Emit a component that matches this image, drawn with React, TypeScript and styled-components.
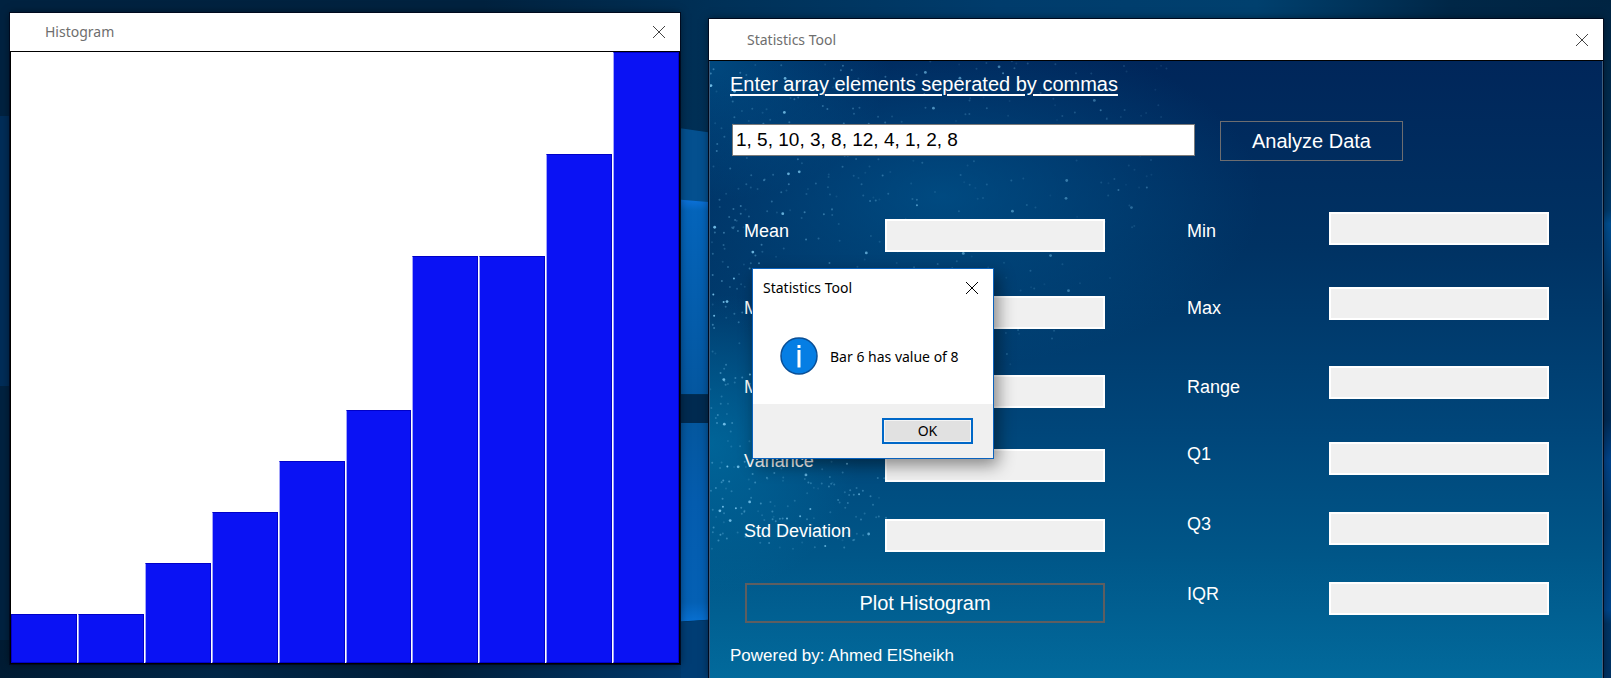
import React from "react";
import styled, { createGlobalStyle } from "styled-components";

const GlobalStyle = createGlobalStyle`
  *, *::before, *::after { box-sizing: border-box; }
  body { margin: 0; background: #00223f; }
`;

const uiFont = `"Noto Sans", "Open Sans", sans-serif`;
const formFont = `"Liberation Sans", Arial, sans-serif`;

const Desktop = styled.main`
  position: relative;
  isolation: isolate;
  display: flex;
  gap: 29px;
  min-height: 100vh;
  padding: 0 8px 0 10px;
  overflow: hidden;
`;

const WallpaperArt = styled.svg`
  position: absolute;
  inset: 0;
  z-index: -1;
  width: 100%;
  height: 100%;
`;

const AppWindow = styled.section<{ $grow: number }>`
  position: relative;
  display: flex;
  flex-direction: column;
  flex: ${(p) => p.$grow} 1 0;
  min-width: 0;
  box-shadow: 0 0 0 1px #000a1e, 0 0 8px rgba(0, 0, 0, 0.5);
`;

const HistogramWindow = styled(AppWindow)`
  margin: 13px 0 14px;
`;

const ToolWindow = styled(AppWindow)`
  margin-top: 19px;
`;

const TitleBar = styled.header<{ $tall?: boolean }>`
  display: flex;
  align-items: center;
  justify-content: space-between;
  height: ${(p) => (p.$tall ? 42 : 39)}px;
  padding: 0 15px 0 ${(p) => (p.$tall ? 38 : 35)}px;
  border-bottom: 1px solid #000;
  background: #fff;
`;

const WindowTitle = styled.h1`
  margin: 0;
  color: #6e6e6e;
  font: 400 14px/20px ${uiFont};
`;

const CloseButton = styled.button`
  display: grid;
  place-items: center;
  width: 12px;
  height: 12px;
  padding: 0;
  border: 0;
  background: none;
  color: #444;
`;

const Plot = styled.div`
  display: flex;
  flex: 1;
  align-items: flex-end;
  gap: 1px;
  border: solid #000;
  border-width: 0 1px 1px;
  background: #fff;
`;

const Bar = styled.div`
  flex: 1;
  border: 1px solid #0000c8;
  background: #0a12f4;

  & + & {
    border-left-color: #a4a6fa;
  }
`;

const ToolBody = styled.form`
  position: relative;
  isolation: isolate;
  flex: 1;
  padding: 11px 53px 7px 20px;
  border: solid #3d5f80;
  border-width: 0 1px;
  background:
    radial-gradient(ellipse 320px 170px at 26% 22%, rgba(0, 92, 150, 0.6), transparent),
    radial-gradient(ellipse 180px 140px at 0 0, rgba(0, 96, 152, 0.6), transparent),
    radial-gradient(ellipse 150px 150px at 0 62%, rgba(0, 112, 164, 0.7), transparent),
    linear-gradient(#00265a, #003263 30%, #00467a 60%, #005688 80%, #026a9c);
  color: #fff;
  font-family: ${formFont};
`;

const Sky = styled.svg`
  position: absolute;
  inset: 0;
  z-index: -1;
  width: 100%;
  height: 100%;
`;

const Prompt = styled.label`
  display: block;
  font-size: 20px;
  line-height: 24px;
  text-decoration: underline;
  text-underline-offset: 3px;
`;

const EntryRow = styled.div`
  display: grid;
  grid-template-columns: 463fr 183fr 121fr;
  align-items: start;
  column-gap: 25px;
  margin: 25px 0 0 2px;
`;

const ArrayInput = styled.input`
  width: 100%;
  height: 32px;
  margin-top: 3px;
  padding: 0 3px;
  border: 1px solid #7a7a7a;
  border-radius: 0;
  background: #fff;
  color: #000;
  font: 19px/24px ${formFont};
`;

const ActionButton = styled.button<{ $thick?: boolean }>`
  height: 40px;
  padding: 0;
  border: ${(p) => (p.$thick ? 2 : 1)}px solid ${(p) => (p.$thick ? "#5e5e60" : "#6d6d70")};
  border-radius: 0;
  background: transparent;
  color: #fff;
  font: 20px/24px ${formFont};
`;

const Results = styled.div`
  display: grid;
  grid-template-columns: 141px minmax(0, 1fr) 82px 142px minmax(0, 1fr);
  grid-template-rows: 75px 79px 76px 70px 70px 41px;
  align-items: start;
  margin: 51px 0 0 14px;
`;

const ResultLabel = styled.label<{ $column: number; $drop: number }>`
  grid-column: ${(p) => p.$column};
  padding-top: ${(p) => p.$drop}px;
  font-size: 18px;
  line-height: 20px;
`;

const ResultField = styled.input<{ $drop?: number }>`
  width: 100%;
  height: 33px;
  margin: ${(p) => p.$drop ?? 0}px 0 0;
  border: 2px solid #fff;
  border-radius: 0;
  background: #f0f0f0;
`;

const PlotButton = styled(ActionButton)`
  grid-column: 1 / 3;
  margin: 1px 0 0 1px;
`;

const Credit = styled.p`
  margin: 23px 0 0;
  font-size: 17px;
  line-height: 20px;
`;

const MessageBox = styled.div`
  position: absolute;
  top: 249px;
  left: 43px;
  display: flex;
  flex-direction: column;
  width: 242px;
  border: 1px solid #0a62bd;
  background: #fff;
  box-shadow: 4px 6px 16px rgba(0, 0, 0, 0.45);
  color: #000;
`;

const MessageHeader = styled.header`
  display: flex;
  align-items: center;
  justify-content: space-between;
  height: 38px;
  padding: 0 15px 0 10px;
`;

const MessageTitle = styled.h2`
  margin: 0;
  font: 400 14px/20px ${uiFont};
`;

const MessageContent = styled.div`
  display: flex;
  align-items: center;
  gap: 12px;
  height: 97px;
  padding: 0 27px;
`;

const MessageText = styled.p`
  margin: 2px 0 0;
  font: 14px/20px ${uiFont};
  white-space: nowrap;
`;

const MessageFooter = styled.footer`
  display: flex;
  align-items: center;
  justify-content: flex-end;
  height: 54px;
  padding: 0 20px;
  background: #f0f0f0;
`;

const OkButton = styled.button`
  width: 91px;
  height: 26px;
  padding: 0;
  border: 2px solid #0068c8;
  border-radius: 0;
  box-shadow: inset 0 0 0 1px #f4f4f4;
  background: #e1e1e1;
  color: #000;
  font: 14px/20px ${uiFont};
`;

const BlackCloseButton = styled(CloseButton)`
  color: #000;
`;

const CloseIcon = () => (
  <svg width="12" height="12" viewBox="0 0 12 12" aria-hidden="true">
    <path d="M0 0L12 12M12 0L0 12" stroke="currentColor" fill="none" />
  </svg>
);

const InfoIcon = () => (
  <svg width="38" height="38" viewBox="0 0 38 38" aria-hidden="true">
    <circle cx="19" cy="19" r="18" fill="#057ee4" stroke="#0a4f96" strokeWidth="1.5" />
    <rect x="17.5" y="8" width="3" height="3" fill="#fff" />
    <rect x="17.5" y="13" width="3" height="17.500" fill="#fff" />
  </svg>
);

const Wallpaper = () => (
  <WallpaperArt viewBox="0 0 1611 678" preserveAspectRatio="none" aria-hidden="true">
    <defs>
      <linearGradient id="sky" x1="0" x2="1" y1="0" y2="0">
        <stop offset="0" stopColor="#002240" />
        <stop offset="0.3" stopColor="#00223f" />
        <stop offset="0.45" stopColor="#003158" />
        <stop offset="0.62" stopColor="#003c6c" />
        <stop offset="0.78" stopColor="#00406e" />
        <stop offset="0.9" stopColor="#002747" />
        <stop offset="1" stopColor="#002442" />
      </linearGradient>
      <linearGradient id="floor" x1="0" x2="1" y1="0" y2="0">
        <stop offset="0" stopColor="#001c34" />
        <stop offset="0.3" stopColor="#002748" />
        <stop offset="0.6" stopColor="#001f3a" />
        <stop offset="1" stopColor="#003d74" />
      </linearGradient>
      <linearGradient id="edge" x1="0" x2="0" y1="0" y2="1">
        <stop offset="0" stopColor="#002442" />
        <stop offset="0.2" stopColor="#002d52" />
        <stop offset="0.31" stopColor="#003a6c" />
        <stop offset="0.33" stopColor="#004e90" />
        <stop offset="0.38" stopColor="#00417c" />
        <stop offset="0.45" stopColor="#003058" />
        <stop offset="0.62" stopColor="#002c58" />
        <stop offset="0.68" stopColor="#00448c" />
        <stop offset="0.76" stopColor="#003a70" />
        <stop offset="0.9" stopColor="#00468c" />
        <stop offset="0.92" stopColor="#003566" />
        <stop offset="1" stopColor="#003264" />
      </linearGradient>
      <linearGradient id="paneTop" x1="0" x2="0" y1="0" y2="1">
        <stop offset="0" stopColor="#0c72dc" />
        <stop offset="0.06" stopColor="#0464ba" />
        <stop offset="1" stopColor="#0457a0" />
      </linearGradient>
      <linearGradient id="paneBottom" x1="0" x2="0" y1="0" y2="1">
        <stop offset="0" stopColor="#04579e" />
        <stop offset="0.4" stopColor="#045cae" />
        <stop offset="0.9" stopColor="#0460b4" />
        <stop offset="1" stopColor="#0870d2" />
      </linearGradient>
    </defs>
    <rect width="1611" height="678" fill="url(#sky)" />
    <rect width="12" y="116" height="270" fill="#002d58" />
    <rect y="640" width="720" height="38" fill="url(#floor)" />
    <path d="M672 127L720 134V210H672Z" fill="#04508f" />
    <path d="M672 199L720 203V394H672Z" fill="url(#paneTop)" />
    <path d="M672 395H720V423H672Z" fill="#002a50" />
    <path d="M672 423H720V619L672 622Z" fill="url(#paneBottom)" />
    <path d="M681 622L720 619V678H681Z" fill="#003d74" />
    <rect x="1600" width="11" height="678" fill="url(#edge)" />
  </WallpaperArt>
);

type Star = { x: number; y: number; r: number; o: number };

/* Seeded scatter, dense at the left edge and thinning out to the right and downwards. */
const makeStars = (): Star[] => {
  let seed = 7331;
  const next = () => {
    seed = (seed * 16807) % 2147483647;
    return seed / 2147483647;
  };
  const stars: Star[] = [];
  for (let i = 0; i < 760; i += 1) {
    const y = next() * 490;
    const reach = y < 220 ? 480 - y * 0.3 : 400 - (y - 220) * 0.9;
    const x = Math.pow(next(), 1.2) * reach;
    const bright = next();
    stars.push({
      x,
      y,
      r: bright > 0.93 ? 1.4 : 1,
      o: (bright > 0.88 ? 0.9 : 0.14 + bright * 0.4) * (1 - x / 700),
    });
  }
  return stars;
};

const stars = makeStars();

const Starfield = () => (
  <Sky viewBox="0 0 892 617" preserveAspectRatio="xMinYMin slice" aria-hidden="true">
    {stars.map((s, i) => (
      <circle key={i} cx={s.x} cy={s.y} r={s.r} fill="#7cc8f0" opacity={s.o} />
    ))}
  </Sky>
);

const values = [1, 1, 2, 3, 4, 5, 8, 8, 10, 12];
const peak = Math.max(...values);

const rows = [
  { left: "Mean", right: "Min", leftDrop: 9, rightDrop: 9, fieldDrop: 7 },
  { left: "Median", right: "Max", leftDrop: 11, rightDrop: 11, fieldDrop: 9 },
  { left: "Mode", right: "Range", leftDrop: 11, rightDrop: 11, fieldDrop: 9 },
  { left: "Variance", right: "Q1", leftDrop: 9, rightDrop: 2, fieldDrop: 7 },
  { left: "Std Deviation", right: "Q3", leftDrop: 9, rightDrop: 2, fieldDrop: 7 },
];

const fieldId = (name: string) => name.toLowerCase().replace(/\s+/g, "-");

export default function App() {
  return (
    <Desktop>
      <GlobalStyle />
      <Wallpaper />
      <HistogramWindow $grow={670} aria-label="Histogram">
        <TitleBar>
          <WindowTitle>Histogram</WindowTitle>
          <CloseButton type="button" aria-label="Close histogram">
            <CloseIcon />
          </CloseButton>
        </TitleBar>
        <Plot>
          {values.map((v, i) => (
            <Bar key={i} style={{ height: `calc((100% + 2px) * ${v / peak} - 2px)` }} />
          ))}
        </Plot>
      </HistogramWindow>

      <ToolWindow $grow={894} aria-label="Statistics Tool">
        <TitleBar $tall>
          <WindowTitle>Statistics Tool</WindowTitle>
          <CloseButton type="button" aria-label="Close statistics tool">
            <CloseIcon />
          </CloseButton>
        </TitleBar>
        <ToolBody onSubmit={(e) => e.preventDefault()}>
          <Starfield />
          <Prompt htmlFor="elements">Enter array elements seperated by commas</Prompt>
          <EntryRow>
            <ArrayInput id="elements" defaultValue="1, 5, 10, 3, 8, 12, 4, 1, 2, 8" />
            <ActionButton type="submit">Analyze Data</ActionButton>
          </EntryRow>
          <Results>
            {rows.map((row) => (
              <React.Fragment key={row.left}>
                <ResultLabel $column={1} $drop={row.leftDrop} htmlFor={fieldId(row.left)}>
                  {row.left}
                </ResultLabel>
                <ResultField $drop={row.fieldDrop} id={fieldId(row.left)} readOnly />
                <ResultLabel $column={4} $drop={row.rightDrop} htmlFor={fieldId(row.right)}>
                  {row.right}
                </ResultLabel>
                <ResultField id={fieldId(row.right)} readOnly />
              </React.Fragment>
            ))}
            <PlotButton type="button" $thick>Plot Histogram</PlotButton>
            <ResultLabel $column={4} $drop={2} htmlFor="iqr">IQR</ResultLabel>
            <ResultField id="iqr" readOnly />
          </Results>
          <Credit>Powered by: Ahmed ElSheikh</Credit>
        </ToolBody>

        <MessageBox role="dialog" aria-labelledby="message-title">
          <MessageHeader>
            <MessageTitle id="message-title">Statistics Tool</MessageTitle>
            <BlackCloseButton type="button" aria-label="Close message">
              <CloseIcon />
            </BlackCloseButton>
          </MessageHeader>
          <MessageContent>
            <InfoIcon />
            <MessageText>Bar 6 has value of 8</MessageText>
          </MessageContent>
          <MessageFooter>
            <OkButton type="button">OK</OkButton>
          </MessageFooter>
        </MessageBox>
      </ToolWindow>
    </Desktop>
  );
}
